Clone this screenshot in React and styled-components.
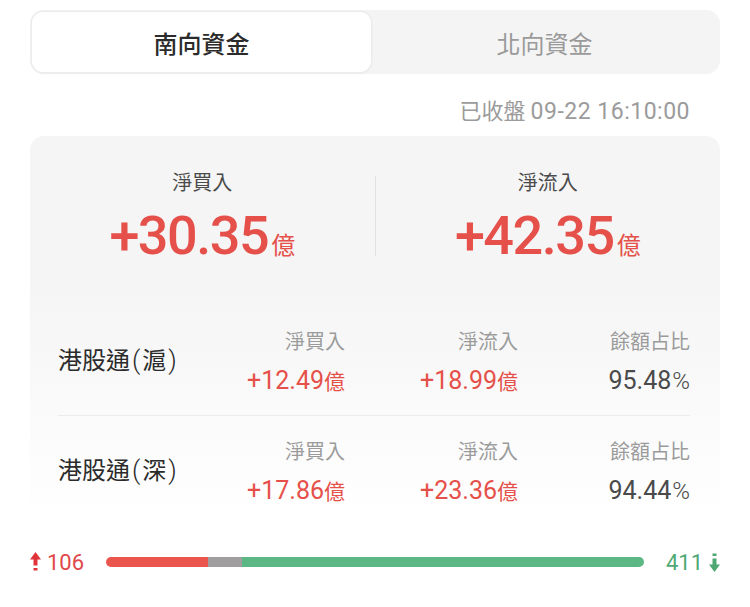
import styled, { createGlobalStyle } from "styled-components";

const NUM_FONT = `Roboto, "Noto Sans CJK TC", sans-serif`;
const CJK_FONT = `"Noto Sans CJK TC", "Noto Sans", sans-serif`;

const GlobalStyle = createGlobalStyle`
  body {
    margin: 0;
    background: #fff;
    font-family: ${CJK_FONT};
  }
`;

const summary = [
  { label: "淨買入", value: "+30.35" },
  { label: "淨流入", value: "+42.35" },
];

const channels = [
  { market: "滬", buy: "+12.49", flow: "+18.99", ratio: "95.48" },
  { market: "深", buy: "+17.86", flow: "+23.36", ratio: "94.44" },
];

const UpArrow = () => (
  <svg width="11" height="20" viewBox="0 0 11 20">
    <polygon points="5.5,0 11,7.5 0,7.5" fill="#e0343a" />
    <rect x="3.5" y="7" width="4" height="6.5" fill="#e0343a" />
    <rect x="3.5" y="16" width="4" height="2.5" fill="#e0343a" />
  </svg>
);

const DownArrow = () => (
  <svg width="11" height="20" viewBox="0 0 11 20">
    <rect x="3.5" y="1.5" width="4" height="2.5" fill="#4fa873" />
    <rect x="3.5" y="6.5" width="4" height="6.5" fill="#4fa873" />
    <polygon points="5.5,20 11,12.5 0,12.5" fill="#4fa873" />
  </svg>
);

const App = () => {
  return (
    <Page>
      <GlobalStyle />
      <Tabs>
        <Tab active>南向資金</Tab>
        <Tab>北向資金</Tab>
      </Tabs>
      <Stamp>
        已收盤 <StampTime>09-22 16:10:00</StampTime>
      </Stamp>
      <Card>
        <Summary>
          <SummaryCell>
            <SummaryLabel>{summary[0].label}</SummaryLabel>
            <BigValue>
              {summary[0].value}
              <Unit>億</Unit>
            </BigValue>
          </SummaryCell>
          <VDivider />
          <SummaryCell>
            <SummaryLabel>{summary[1].label}</SummaryLabel>
            <BigValue>
              {summary[1].value}
              <Unit>億</Unit>
            </BigValue>
          </SummaryCell>
        </Summary>
        {channels.map((c, i) => (
          <Row key={c.market} first={i === 0}>
            <RowName>
              港股通<Paren>(</Paren>
              {c.market}
              <Paren>)</Paren>
            </RowName>
            <Col>
              <ColLabel>淨買入</ColLabel>
              <ColValue>
                {c.buy}
                <SmallUnit>億</SmallUnit>
              </ColValue>
            </Col>
            <Col>
              <ColLabel>淨流入</ColLabel>
              <ColValue>
                {c.flow}
                <SmallUnit>億</SmallUnit>
              </ColValue>
            </Col>
            <Col>
              <ColLabel>餘額占比</ColLabel>
              <ColValue neutral>
                {c.ratio}
                <Pct>%</Pct>
              </ColValue>
            </Col>
          </Row>
        ))}
      </Card>
      <Breadth>
        <UpArrow />
        <Count up>106</Count>
        <Bar>
          <Segment color="#ea554e" style={{ width: "19%" }} />
          <Segment color="#a19e9f" style={{ width: "6.2%" }} />
          <Segment color="#5bb884" style={{ flex: 1 }} />
        </Bar>
        <Count>411</Count>
        <DownArrow />
      </Breadth>
    </Page>
  );
};

const Page = styled.div`
  width: 690px;
  padding: 10px 30px 0;
`;

const Tabs = styled.div`
  display: flex;
  height: 64px;
  padding: 2px;
  box-sizing: border-box;
  background: #f4f4f4;
  border-radius: 14px;
`;

const Tab = styled.div`
  width: ${(p) => (p.active ? "339px" : "auto")};
  flex: ${(p) => (p.active ? "none" : 1)};
  display: flex;
  align-items: center;
  justify-content: center;
  border-radius: 11px;
  background: ${(p) => (p.active ? "#fff" : "transparent")};
  box-shadow: ${(p) =>
    p.active ? "0 0 0 1.5px #ececec, 0 2px 3px rgba(0,0,0,0.04)" : "none"};
  font-size: 24px;
  font-weight: ${(p) => (p.active ? 500 : 400)};
  color: ${(p) => (p.active ? "#2b2b2b" : "#9a9a9a")};
`;

const Stamp = styled.div`
  height: 26px;
  margin-top: 22px;
  padding-right: 30px;
  text-align: right;
  font-size: 22px;
  line-height: 26px;
  color: #9b9b9b;
`;

const StampTime = styled.span`
  font-family: ${NUM_FONT};
  font-size: 23px;
  letter-spacing: 0.5px;
  line-height: 1;
`;

const Card = styled.div`
  margin-top: 14px;
  border-radius: 14px 14px 0 0;
  background: linear-gradient(#f5f5f5 0, #f5f5f5 40%, #ffffff 100%);
  padding-bottom: 16px;
`;

const Summary = styled.div`
  display: flex;
  align-items: center;
  height: 164px;
  box-sizing: border-box;
  padding-bottom: 4px;
`;

const SummaryCell = styled.div`
  flex: 1;
  display: flex;
  flex-direction: column;
  align-items: center;
`;

const VDivider = styled.div`
  width: 1px;
  height: 80px;
  background: #e2e2e2;
`;

const SummaryLabel = styled.div`
  font-size: 20px;
  line-height: 26px;
  color: #4a4a4a;
`;

const BigValue = styled.div`
  margin-top: 13px;
  height: 56px;
  font-family: ${NUM_FONT};
  font-size: 54px;
  line-height: 56px;
  font-weight: 500;
  letter-spacing: -1.5px;
  color: #e5514a;
`;

const Unit = styled.span`
  font-family: ${CJK_FONT};
  font-size: 24px;
  line-height: 1;
  font-weight: 400;
  letter-spacing: 0;
  margin-left: 3px;
`;

const Row = styled.div`
  display: grid;
  grid-template-columns: minmax(0, 1fr) 172px 173px 172px;
  align-items: center;
  margin: 0 30px 0 28px;
  padding: ${(p) => (p.first ? "26px 0 19px" : "20px 0 0")};
  border-top: ${(p) => (p.first ? "none" : "1px solid #ececec")};
`;

const RowName = styled.div`
  white-space: nowrap;
  font-size: 24px;
  line-height: 30px;
  padding-bottom: 4px;
  color: #2b2b2b;
`;

const Paren = styled.span`
  font-family: ${NUM_FONT};
  font-size: 26px;
  line-height: 1;
  font-weight: 300;
  margin: 0 2px;
`;

const Col = styled.div`
  display: flex;
  flex-direction: column;
  align-items: flex-end;
  gap: 10px;
`;

const ColLabel = styled.div`
  font-size: 20px;
  line-height: 30px;
  color: #9b9b9b;
`;

const ColValue = styled.div`
  height: 30px;
  font-family: ${NUM_FONT};
  font-size: 25px;
  line-height: 30px;
  font-weight: 400;
  color: ${(p) => (p.neutral ? "#4a4a4a" : "#e5514a")};
`;

const SmallUnit = styled.span`
  font-family: ${CJK_FONT};
  font-size: 21px;
  line-height: 1;
  font-weight: 400;
`;

const Pct = styled.span`
  font-size: 24px;
  line-height: 1;
  font-weight: 300;
  margin-left: 1px;
`;

const Breadth = styled.div`
  display: flex;
  align-items: center;
  margin-top: 27px;
  height: 26px;
`;

const Count = styled.div`
  font-family: ${NUM_FONT};
  font-size: 22px;
  color: ${(p) => (p.up ? "#e0484a" : "#4fa873")};
  margin: ${(p) => (p.up ? "0 22px 0 6px" : "0 6px 0 22px")};
`;

const Bar = styled.div`
  flex: 1;
  display: flex;
  height: 10px;
  border-radius: 5px;
  overflow: hidden;
`;

const Segment = styled.div`
  background: ${(p) => p.color};
`;

export default App;
